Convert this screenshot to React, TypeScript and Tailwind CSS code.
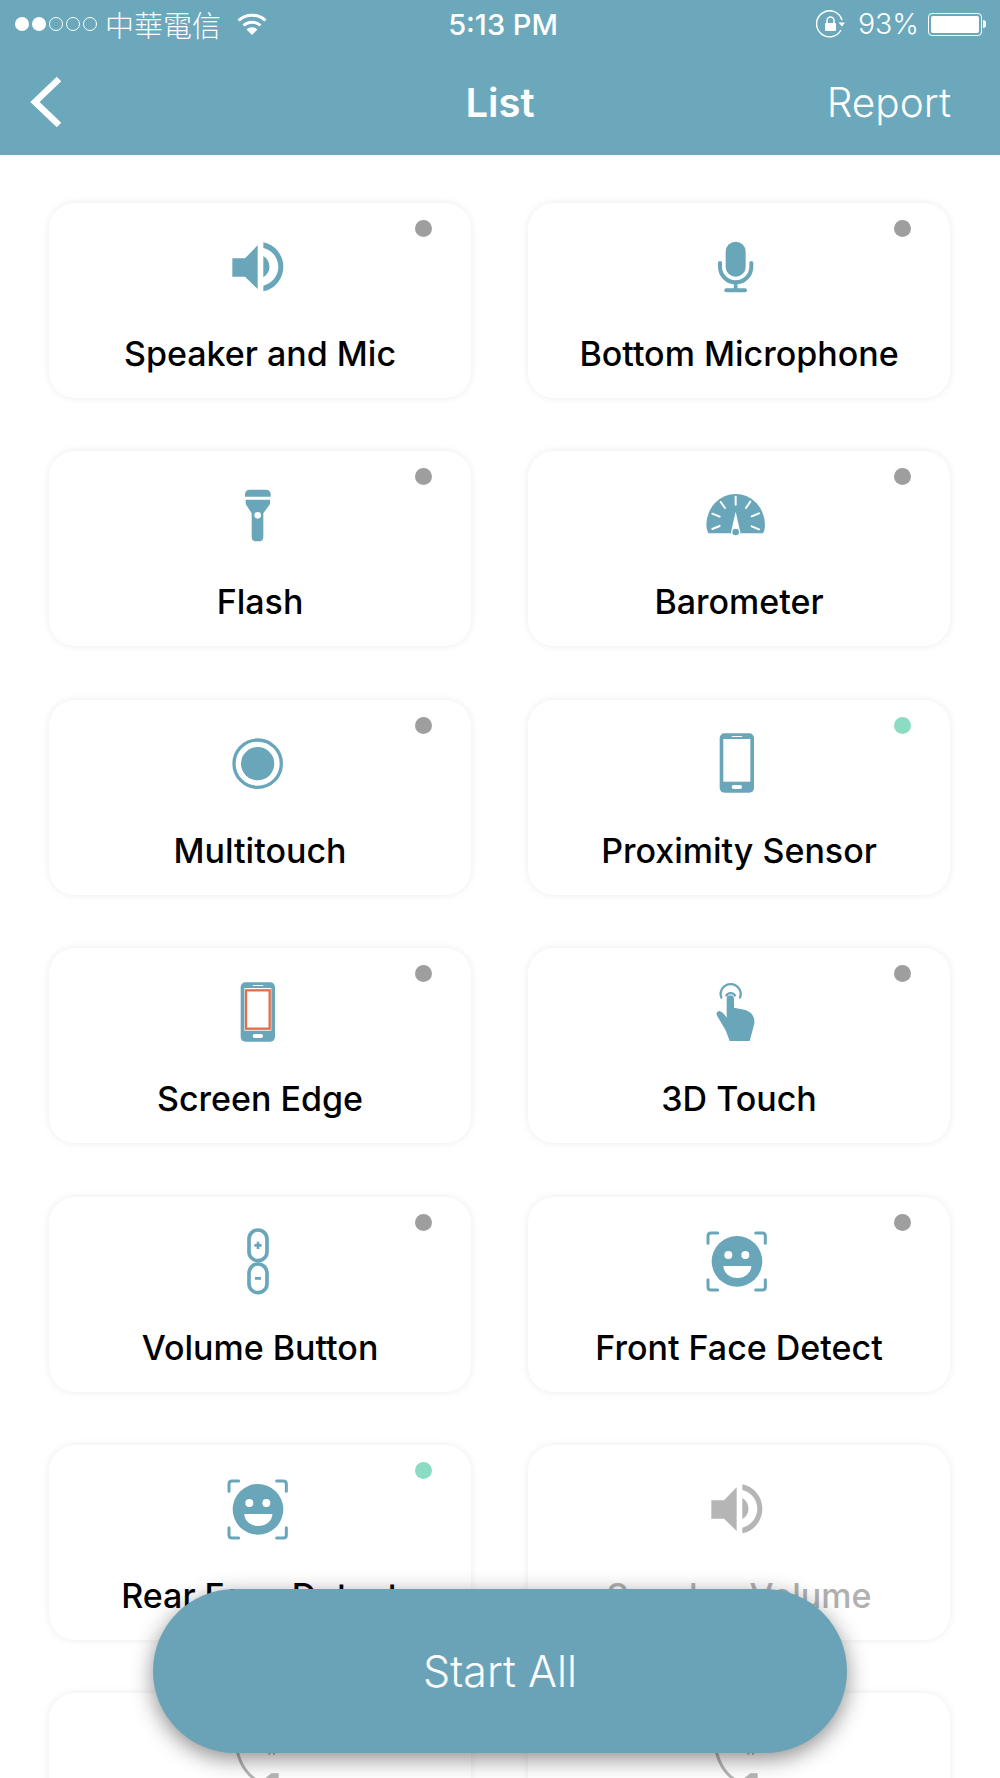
import type { ReactNode } from 'react'

const TEAL = '#6aa6ba'
const GREY = '#b5b5b5'

// icons are drawn on a 360x270 grid (3 units per pixel), dy nudges them per row
function Icon({ dy = 0, children }: { dy?: number; children: ReactNode }) {
  return (
    <svg width="120" height="90" viewBox="0 0 360 270" className="shrink-0 overflow-visible">
      <g transform={`translate(0 ${dy})`}>{children}</g>
    </svg>
  )
}

function SpeakerIcon({ color = TEAL, dy = 0 }: { color?: string; dy?: number }) {
  return (
    <Icon dy={dy}>
      <path fill={color} d="M97 115H135L173 76V207L135 170H97Z" />
      <path fill={color} d="M190 108A37 37 0 0 1 190 172Z" />
      <path fill={color} d="M190 67A75 75 0 0 1 190 214V197A58 58 0 0 0 190 84Z" />
    </Icon>
  )
}

function MicIcon() {
  return (
    <Icon dy={15}>
      <rect x="140" y="50" width="60" height="105" rx="30" fill={TEAL} />
      <path d="M123 114V125A47 47 0 0 0 217 125V114" fill="none" stroke={TEAL} strokeWidth="12" strokeLinecap="round" />
      <path d="M170 170V196" stroke={TEAL} strokeWidth="11" />
      <rect x="136" y="190" width="68" height="12" rx="6" fill={TEAL} />
    </Icon>
  )
}

function FlashIcon() {
  return (
    <Icon dy={8}>
      <path fill={TEAL} d="M135 72Q135 57 150 57H197Q212 57 212 72V78H135Z" />
      <path fill={TEAL} d="M137 87H210V100L190 128V198Q190 212 176 212H169Q155 212 155 198V128L137 100Z" />
      <circle cx="173" cy="134" r="10" fill="#fff" />
    </Icon>
  )
}

function BarometerIcon() {
  const ticks = [
    [100, 177, 122, 168],
    [100, 131, 122, 140],
    [125, 96, 138, 114],
    [170, 80, 170, 104],
    [214, 95, 201, 114],
    [240, 130, 218, 139],
    [240, 178, 218, 169],
  ]
  return (
    <Icon dy={6}>
      <path fill={TEAL} d="M82 165A88 93 0 0 1 258 165Q258 180 252 190H88Q82 178 82 165Z" />
      {ticks.map(([x1, y1, x2, y2]) => (
        <line key={`${x1}-${y1}`} x1={x1} y1={y1} x2={x2} y2={y2} stroke="#fff" strokeWidth="6" strokeLinecap="round" />
      ))}
      <path fill="#fff" d="M170 125L158 178H182Z" />
      <circle cx="170" cy="186" r="14" fill="#fff" />
      <circle cx="170" cy="186" r="10" fill={TEAL} />
    </Icon>
  )
}

function MultitouchIcon() {
  return (
    <Icon dy={10}>
      <circle cx="173" cy="130" r="71" fill="none" stroke={TEAL} strokeWidth="10" />
      <circle cx="173" cy="130" r="50" fill={TEAL} />
    </Icon>
  )
}

function PhoneIcon({ edge = false, dy = 0 }: { edge?: boolean; dy?: number }) {
  return (
    <Icon dy={dy}>
      <rect x="122" y="36" width="103" height="178" rx="14" fill={TEAL} />
      <rect x="133" y="53" width="81" height="128" fill="#fff" />
      {edge && <rect x="138" y="60" width="71" height="115" fill="#fff" stroke="#df6f4f" strokeWidth="7" />}
      <rect x="158" y="44" width="32" height="3" rx="1.5" fill="#fff" />
      <rect x="158" y="191" width="31" height="12" rx="6" fill="#fff" />
    </Icon>
  )
}

function TouchIcon() {
  return (
    <Icon dy={16}>
      <path fill={TEAL} d="M143 86A11 11 0 0 1 165 86V112L180 115L200 119L215 127Q228 140 226 160L212 212H152L140 180L115 138Q108 125 120 122Q130 122 143 142Z" />
      <path d="M141 78A15 15 0 0 1 169 78" fill="none" stroke={TEAL} strokeWidth="7" />
      <path d="M127 82A30 30 0 1 1 183 82" fill="none" stroke={TEAL} strokeWidth="7" strokeLinecap="round" />
    </Icon>
  )
}

function VolumeIcon() {
  return (
    <Icon>
      <rect x="147" y="48" width="54" height="92" rx="27" fill="none" stroke={TEAL} strokeWidth="11" />
      <rect x="147" y="150" width="54" height="86" rx="27" fill="none" stroke={TEAL} strokeWidth="11" />
      <path d="M163 94H185M174 83V105M165 193H183" stroke={TEAL} strokeWidth="8" />
    </Icon>
  )
}

function FaceIcon() {
  return (
    <Icon>
      <circle cx="174" cy="142" r="76" fill={TEAL} />
      <circle cx="148" cy="123" r="12" fill="#fff" />
      <circle cx="199" cy="123" r="12" fill="#fff" />
      <path d="M133 156H217A42 36 0 0 1 133 156Z" fill="#fff" />
      <g fill="none" stroke={TEAL} strokeWidth="9" strokeLinecap="round">
        <path d="M87 88V66Q87 57 96 57H116" />
        <path d="M259 88V66Q259 57 250 57H230" />
        <path d="M87 197V219Q87 228 96 228H116" />
        <path d="M259 197V219Q259 228 250 228H230" />
      </g>
    </Icon>
  )
}

function CallIcon() {
  return (
    <Icon>
      <path d="M108 100Q118 190 190 222" fill="none" stroke={GREY} strokeWidth="9" />
      <path fill={GREY} d="M186 212L214 190H236V232H200Z" />
      <path d="M208 122V134M222 122V134" stroke={GREY} strokeWidth="6" />
    </Icon>
  )
}

type Item = { label?: string; icon: ReactNode; done?: boolean; off?: boolean }

const items: Item[] = [
  { label: 'Speaker and Mic', icon: <SpeakerIcon /> },
  { label: 'Bottom Microphone', icon: <MicIcon /> },
  { label: 'Flash', icon: <FlashIcon /> },
  { label: 'Barometer', icon: <BarometerIcon /> },
  { label: 'Multitouch', icon: <MultitouchIcon /> },
  { label: 'Proximity Sensor', icon: <PhoneIcon dy={13} />, done: true },
  { label: 'Screen Edge', icon: <PhoneIcon edge dy={16} /> },
  { label: '3D Touch', icon: <TouchIcon /> },
  { label: 'Volume Button', icon: <VolumeIcon /> },
  { label: 'Front Face Detect', icon: <FaceIcon /> },
  { label: 'Rear Face Detect', icon: <FaceIcon />, done: true },
  { label: 'Speaker Volume', icon: <SpeakerIcon color={GREY} />, off: true },
  // last row runs off the bottom of the screen, labels never show
  { icon: <CallIcon />, off: true },
  { icon: <CallIcon />, off: true },
]

function Card({ item }: { item: Item }) {
  return (
    <div className="relative flex flex-col items-center rounded-[26px] bg-white pt-[17px] shadow-[0_0_9px_rgba(0,0,0,0.08)]">
      {!item.off && (
        <span className={`absolute right-[39px] top-[17px] h-[17px] w-[17px] rounded-full ${item.done ? 'bg-[#8cdcc3]' : 'bg-[#9e9e9e]'}`} />
      )}
      {item.icon}
      {item.label && (
        <span className={`mt-[24px] text-[34px] font-medium leading-[40px] ${item.off ? 'text-[#b0b0b0]' : 'text-black'}`}>
          {item.label}
        </span>
      )}
    </div>
  )
}

function StatusBar() {
  return (
    <div className="grid h-[48px] grid-cols-[1fr_auto_1fr] items-center text-white">
      <div className="flex items-center pl-[15px]">
        <div className="flex items-center gap-[3px]">
          <span className="h-[14px] w-[14px] rounded-full bg-white" />
          <span className="h-[14px] w-[14px] rounded-full bg-white" />
          <span className="h-[14px] w-[14px] rounded-full border border-white" />
          <span className="h-[14px] w-[14px] rounded-full border border-white" />
          <span className="h-[14px] w-[14px] rounded-full border border-white" />
        </div>
        <span className="ml-[8px] font-['Noto_Sans_CJK_TC',sans-serif] text-[29px] font-light leading-none">中華電信</span>
        <svg width="30" height="22" viewBox="0 0 30 22" className="ml-[16px]">
          <path d="M1.5 7.5C9 .5 21 .5 28.5 7.5" fill="none" stroke="#fff" strokeWidth="3" />
          <path d="M6.5 12.5C11.5 8 18.5 8 23.5 12.5" fill="none" stroke="#fff" strokeWidth="3" />
          <path d="M15 22L9.5 16.5C12.5 13.5 17.5 13.5 20.5 16.5Z" fill="#fff" />
        </svg>
      </div>
      <span className="pl-[6px] text-[29px] font-medium leading-none">5:13 PM</span>
      <div className="flex items-center justify-end pr-[14px]">
        <svg width="30" height="28" viewBox="0 0 30 28">
          <path d="M25 20A13 13 0 1 1 26 10" fill="none" stroke="#fff" strokeWidth="1.5" />
          <path d="M22.5 12.5H29L26 16.5Z" fill="#fff" />
          <rect x="9" y="13" width="11" height="8" rx="1" fill="#fff" />
          <path d="M11 13V10.5A3.5 3.5 0 0 1 18 10.5V13" fill="none" stroke="#fff" strokeWidth="1.5" />
        </svg>
        <span className="ml-[12px] text-[28.5px] font-light leading-none">93%</span>
        <div className="ml-[9px] flex h-[23px] w-[54px] items-center rounded-[4px] border border-white p-[2px]">
          <div className="h-full w-[48px] rounded-[2px] bg-white" />
        </div>
        <span className="ml-[1px] h-[8px] w-[3px] rounded-r-full bg-white" />
      </div>
    </div>
  )
}

function NavBar() {
  return (
    <div className="grid h-[107px] grid-cols-3 items-center text-white">
      <div className="pl-[30px]">
        <svg width="32" height="52" viewBox="0 0 32 52">
          <path d="M29 3L5 26L29 49" fill="none" stroke="#fff" strokeWidth="6.5" />
        </svg>
      </div>
      <span className="pt-[2px] text-center text-[40px] font-semibold leading-none">List</span>
      <span className="pr-[49px] pt-[3px] text-right text-[40.5px] font-light leading-none">Report</span>
    </div>
  )
}

export default function App() {
  return (
    <div className="relative h-[1778px] w-[1000px] overflow-hidden bg-white font-['Inter',sans-serif]">
      <div className="h-[155px] bg-[#6ba8bb]">
        <StatusBar />
        <NavBar />
      </div>
      <div className="grid grid-cols-2 gap-x-[57px] gap-y-[53.4px] pl-[49px] pr-[50px] pt-[48px] [grid-auto-rows:195px]">
        {items.map((item, i) => (
          <Card key={i} item={item} />
        ))}
      </div>
      <button className="absolute bottom-[25px] left-[153px] flex h-[164px] w-[694px] items-center justify-center rounded-full bg-[#6aa3b8] text-[43px] font-light text-white shadow-[0_6px_22px_rgba(0,0,0,0.45)]">
        Start All
      </button>
    </div>
  )
}
